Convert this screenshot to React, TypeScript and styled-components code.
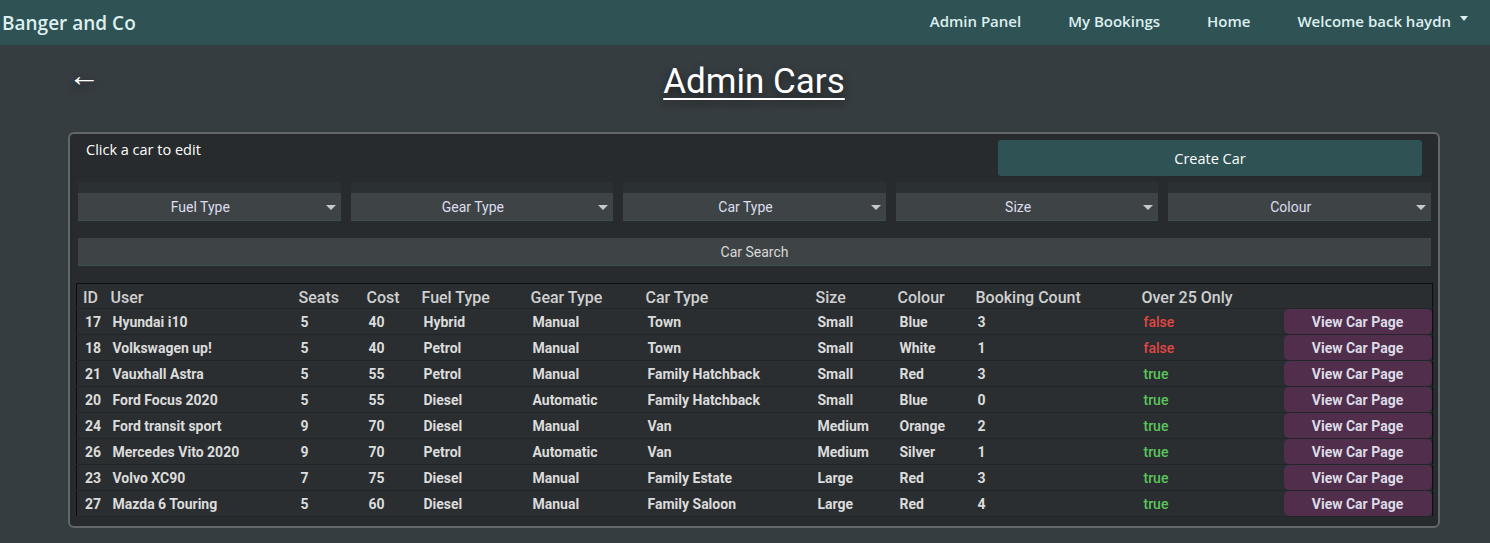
import styled, { createGlobalStyle } from "styled-components";

const GlobalStyle = createGlobalStyle`
  body {
    margin: 0;
    background: #363d40;
    font-family: Roboto, "Liberation Sans", sans-serif;
  }
`;

const NavBar = styled.nav`
  height: 45px;
  background: #2f5254;
  display: flex;
  align-items: center;
  justify-content: space-between;
  padding: 0 22px 0 2px;
`;

const Brand = styled.div`
  font-family: "Open Sans", sans-serif;
  font-weight: 600;
  font-size: 19px;
  color: #dcefef;
`;

const NavLinks = styled.div`
  display: flex;
  align-items: center;
  gap: 47px;
  padding-bottom: 4px;
`;

const NavLink = styled.span`
  font-family: "Open Sans", sans-serif;
  font-weight: 600;
  font-size: 15px;
  color: #dcefef;
  display: flex;
  align-items: center;
`;

const Caret = styled.span`
  display: inline-block;
  margin-left: 9px;
  border-top: 5px solid #dcefef;
  border-left: 4px solid transparent;
  border-right: 4px solid transparent;
  transform: translateY(-2px);
`;

const Main = styled.main`
  width: 1372px;
  margin-left: 68px;
`;

const Header = styled.div`
  position: relative;
  height: 87px;
  display: flex;
  justify-content: center;
  align-items: flex-start;
`;

const BackArrow = styled.span`
  position: absolute;
  left: 0;
  top: 14px;
  font-size: 32px;
  color: #fff;
  text-shadow: 0 4px 8px rgba(0, 0, 0, 0.5);
  line-height: 1;
`;

const Title = styled.h1`
  margin: 16px 0 0;
  font-weight: 400;
  font-size: 35px;
  color: #fff;
  text-decoration: underline;
  text-underline-offset: 5px;
  text-decoration-thickness: 2px;
  text-shadow: 0 4px 8px rgba(0, 0, 0, 0.6);
`;

const Panel = styled.section`
  border: 2px solid #62686a;
  border-radius: 6px;
  background: #272b2d;
  height: 396px;
  box-sizing: border-box;
`;

const TopRow = styled.div`
  display: grid;
  grid-template-columns: 2fr 1fr;
  padding-top: 6px;
`;

const Hint = styled.div`
  padding: 0 16px;
  font-family: "Open Sans", sans-serif;
  font-size: 14.5px;
  color: #fff;
  line-height: 20px;
`;

const CreateButton = styled.button`
  margin: 0 16px;
  height: 36px;
  border: none;
  border-radius: 3px;
  background: #2f5254;
  color: #fff;
  font-family: "Open Sans", sans-serif;
  font-size: 14.5px;
`;

const Filters = styled.div`
  display: grid;
  grid-template-columns: repeat(5, 1fr);
  gap: 10px;
  padding: 6px 7px 0 8px;
`;

const SelectBox = styled.div`
  background: #2b3032;
  padding-top: 11px;
`;

const SelectField = styled.div`
  position: relative;
  height: 28px;
  padding-right: 18px;
  background: #3e4446;
  border-bottom: 1px solid #35504f;
  box-sizing: border-box;
  display: flex;
  align-items: center;
  justify-content: center;
  font-size: 14px;
  color: #dde;
`;

const SelectCaret = styled.span`
  position: absolute;
  right: 5px;
  top: 12px;
  border-top: 5px solid #c8c8c8;
  border-left: 5px solid transparent;
  border-right: 5px solid transparent;
`;

const SearchField = styled.div`
  margin: 17px 7px 0 8px;
  height: 28px;
  background: #3e4446;
  border-bottom: 1px solid #35504f;
  box-sizing: border-box;
  display: flex;
  align-items: center;
  justify-content: center;
  font-size: 14px;
  color: #d8d8d8;
`;

const Table = styled.table`
  margin: 17px 6px 0;
  width: 1356px;
  border-collapse: collapse;
  table-layout: fixed;
  background: #2a2e30;
  border: 1px solid #0c0d0d;
`;

const Th = styled.th`
  height: 22px;
  padding: 2px 0 0 6px;
  text-align: left;
  font-size: 16px;
  font-weight: 500;
  color: #d0d0d0;
  border-bottom: 1px solid #222628;
`;

const Td = styled.td`
  height: 25px;
  padding: 0 0 0 8px;
  font-size: 14px;
  font-weight: 700;
  color: #dcdcdc;
  border-bottom: 1px solid #222628;
`;

const BoolCell = styled(Td)<{ $ok: boolean }>`
  font-weight: 500;
  color: ${(p) => (p.$ok ? "#5cc45c" : "#e04646")};
`;

const ButtonCell = styled.td`
  padding: 0;
  height: 25px;
  border-bottom: 1px solid #222628;
`;

const ViewButton = styled.button`
  display: block;
  width: 148px;
  height: 25px;
  border: none;
  border-radius: 5px;
  background: #512e4c;
  color: #dcdce6;
  font-family: Roboto, sans-serif;
  font-size: 14px;
  font-weight: 700;
`;

const columns = [28, 188, 68, 55, 109, 115, 170, 82, 78, 166, 148, 149];
const headings = ["ID", "User", "Seats", "Cost", "Fuel Type", "Gear Type", "Car Type", "Size", "Colour", "Booking Count", "Over 25 Only", ""];

const cars = [
  { id: 17, name: "Hyundai i10", seats: 5, cost: 40, fuel: "Hybrid", gear: "Manual", type: "Town", size: "Small", colour: "Blue", bookings: 3, over25: false },
  { id: 18, name: "Volkswagen up!", seats: 5, cost: 40, fuel: "Petrol", gear: "Manual", type: "Town", size: "Small", colour: "White", bookings: 1, over25: false },
  { id: 21, name: "Vauxhall Astra", seats: 5, cost: 55, fuel: "Petrol", gear: "Manual", type: "Family Hatchback", size: "Small", colour: "Red", bookings: 3, over25: true },
  { id: 20, name: "Ford Focus 2020", seats: 5, cost: 55, fuel: "Diesel", gear: "Automatic", type: "Family Hatchback", size: "Small", colour: "Blue", bookings: 0, over25: true },
  { id: 24, name: "Ford transit sport", seats: 9, cost: 70, fuel: "Diesel", gear: "Manual", type: "Van", size: "Medium", colour: "Orange", bookings: 2, over25: true },
  { id: 26, name: "Mercedes Vito 2020", seats: 9, cost: 70, fuel: "Petrol", gear: "Automatic", type: "Van", size: "Medium", colour: "Silver", bookings: 1, over25: true },
  { id: 23, name: "Volvo XC90", seats: 7, cost: 75, fuel: "Diesel", gear: "Manual", type: "Family Estate", size: "Large", colour: "Red", bookings: 3, over25: true },
  { id: 27, name: "Mazda 6 Touring", seats: 5, cost: 60, fuel: "Diesel", gear: "Manual", type: "Family Saloon", size: "Large", colour: "Red", bookings: 4, over25: true },
];

const filters = ["Fuel Type", "Gear Type", "Car Type", "Size", "Colour"];

export default function App() {
  return (
    <>
      <GlobalStyle />
      <NavBar>
        <Brand>Banger and Co</Brand>
        <NavLinks>
          <NavLink>Admin Panel</NavLink>
          <NavLink>My Bookings</NavLink>
          <NavLink>Home</NavLink>
          <NavLink>
            Welcome back haydn
            <Caret />
          </NavLink>
        </NavLinks>
      </NavBar>
      <Main>
        <Header>
          <BackArrow>←</BackArrow>
          <Title>Admin Cars</Title>
        </Header>
        <Panel>
          <TopRow>
            <Hint>Click a car to edit</Hint>
            <CreateButton>Create Car</CreateButton>
          </TopRow>
          <Filters>
            {filters.map((f) => (
              <SelectBox key={f}>
                <SelectField>
                  {f}
                  <SelectCaret />
                </SelectField>
              </SelectBox>
            ))}
          </Filters>
          <SearchField>Car Search</SearchField>
          <Table>
            <colgroup>
              {columns.map((w, i) => (
                <col key={i} style={{ width: w }} />
              ))}
            </colgroup>
            <thead>
              <tr>
                {headings.map((h, i) => (
                  <Th key={i}>{h}</Th>
                ))}
              </tr>
            </thead>
            <tbody>
              {cars.map((c) => (
                <tr key={c.id}>
                  <Td>{c.id}</Td>
                  <Td>{c.name}</Td>
                  <Td>{c.seats}</Td>
                  <Td>{c.cost}</Td>
                  <Td>{c.fuel}</Td>
                  <Td>{c.gear}</Td>
                  <Td>{c.type}</Td>
                  <Td>{c.size}</Td>
                  <Td>{c.colour}</Td>
                  <Td>{c.bookings}</Td>
                  <BoolCell $ok={c.over25}>{String(c.over25)}</BoolCell>
                  <ButtonCell>
                    <ViewButton>View Car Page</ViewButton>
                  </ButtonCell>
                </tr>
              ))}
            </tbody>
          </Table>
        </Panel>
      </Main>
    </>
  );
}
